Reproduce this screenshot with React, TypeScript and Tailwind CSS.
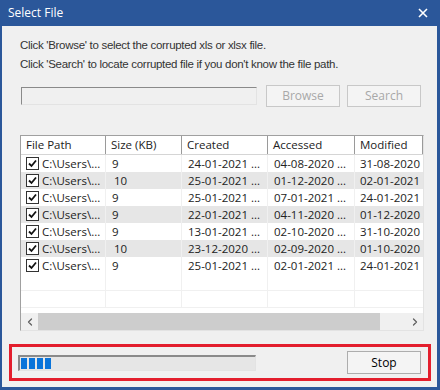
import { ChevronLeft, ChevronRight } from "lucide-react";

const rows = [
  ["9", "24-01-2021 13:05", "04-08-2020 10:12", "31-08-2020 12:40"],
  ["10", "25-01-2021 11:20", "01-12-2020 09:45", "02-01-2021 14:22"],
  ["9", "25-01-2021 11:24", "07-01-2021 16:03", "24-01-2021 17:30"],
  ["9", "22-01-2021 10:02", "04-11-2020 12:18", "01-12-2020 20:11"],
  ["9", "13-01-2021 15:47", "02-10-2020 11:06", "31-10-2020 18:55"],
  ["10", "23-12-2020 09:33", "02-09-2020 13:27", "01-10-2020 10:40"],
  ["9", "25-01-2021 12:09", "02-01-2021 08:14", "24-01-2021 19:02"],
];

const cols = ["w-[85px]", "w-[76px]", "w-[86px]", "w-[87px]", "w-[68px]"];

const CheckBox = () => (
  <span className="w-[13px] h-[13px] shrink-0 border border-[#333] bg-white flex items-center justify-center">
    <svg width="9" height="9" viewBox="0 0 9 9">
      <path d="M1 4.5 L3.5 7 L8 1.5" stroke="#111" strokeWidth="1.8" fill="none" />
    </svg>
  </span>
);

const App = () => {
  return (
    <div className="w-[440px] h-[390px] bg-[#2b579a] flex flex-col font-['Open_Sans',sans-serif]">
      {/* title bar */}
      <div className="h-[26px] flex items-center justify-between pl-[8px] pr-[12px] text-white">
        <span className="text-[12px]">Select File</span>
        <svg width="10" height="10" viewBox="0 0 10 10">
          <path d="M1 1 L9 9 M9 1 L1 9" stroke="white" strokeWidth="1.6" />
        </svg>
      </div>

      <div className="flex-1 bg-[#f0f0f0] ml-[2px] mr-[3px] mb-[3px] flex flex-col">
        <div className="pt-[10px] pl-[18px] text-[11.5px] tracking-[-0.3px] leading-[19px] text-[#333] font-['Liberation_Sans',sans-serif]">
          <p>Click 'Browse' to select the corrupted xls or xlsx file.</p>
          <p>Click 'Search' to locate corrupted file if you don't know the file path.</p>
        </div>

        <div className="mt-[11px] ml-[19px] flex items-center">
          <div className="w-[236px] h-[18px] border-t border-l border-[#8a8a8a] border-b border-r border-b-[#e3e3e3] border-r-[#e3e3e3] bg-[#f0f0f0]" />
          <button className="ml-[9px] w-[74px] h-[22px] border border-[#c8c8c8] bg-[#f4f4f4] text-[12px] text-[#a8a8a8]">
            Browse
          </button>
          <button className="ml-[7px] w-[74px] h-[22px] border border-[#c8c8c8] bg-[#f4f4f4] text-[12px] text-[#a8a8a8]">
            Search
          </button>
        </div>

        {/* file list */}
        <div className="mt-[28px] ml-[18px] w-[404px] h-[196px] border-t border-l border-[#a0a0a0] border-b border-r border-b-[#e3e3e3] border-r-[#e3e3e3] bg-white flex flex-col text-[11.5px] text-[#222]">
          <div className="h-[19px] flex shrink-0 border-b border-[#d5d5d5] bg-white">
            {["File Path", "Size (KB)", "Created", "Accessed", "Modified"].map((h, i) => (
              <div
                key={h}
                className={`${cols[i]} shrink-0 pl-[5px] flex items-center border-r border-[#9a9a9a] overflow-hidden whitespace-nowrap`}
              >
                {h}
              </div>
            ))}
          </div>
          <div className="flex-1 overflow-hidden">
            {rows.map((r, idx) => (
              <div
                key={idx}
                className={`h-[17px] flex ${idx % 2 === 1 ? "bg-[#e6e6e6]" : "bg-white"}`}
              >
                <div className={`${cols[0]} shrink-0 pl-[5px] flex items-center gap-[3px] border-r border-[#f0f0f0] overflow-hidden whitespace-nowrap`}>
                  <CheckBox />
                  <span>C:\Users\...</span>
                </div>
                <div className={`${cols[1]} shrink-0 ${r[0] === "10" ? "pl-[8px]" : "pl-[6px]"} flex items-center border-r border-[#f0f0f0]`}>
                  {r[0]}
                </div>
                <div className={`${cols[2]} shrink-0 pl-[6px] flex items-center border-r border-[#f0f0f0] whitespace-nowrap overflow-hidden`}>
                  {r[1].slice(0, 10)} ...
                </div>
                <div className={`${cols[3]} shrink-0 pl-[6px] flex items-center border-r border-[#f0f0f0] whitespace-nowrap overflow-hidden`}>
                  {r[2].slice(0, 10)} ...
                </div>
                <div className={`${cols[4]} shrink-0 pl-[5px] flex items-center whitespace-nowrap overflow-hidden`}>
                  {r[3]}
                </div>
              </div>
            ))}
            {[0, 1].map((k) => (
              <div key={k} className="h-[17px] flex border-b border-[#f0f0f0]">
                {cols.slice(0, 4).map((c) => (
                  <div key={c} className={`${c} shrink-0 border-r border-[#f0f0f0]`} />
                ))}
              </div>
            ))}
          </div>
          <div className="h-[17px] shrink-0 flex items-center bg-[#f0f0f0]">
            <span className="w-[17px] flex justify-center text-[#606060]">
              <ChevronLeft size={12} strokeWidth={2.5} />
            </span>
            <div className="w-[342px] h-[17px] bg-[#cdcdcd]" />
            <div className="flex-1" />
            <span className="w-[17px] flex justify-center text-[#606060]">
              <ChevronRight size={12} strokeWidth={2.5} />
            </span>
          </div>
        </div>

        {/* status area */}
        <div className="mt-[13px] ml-[7px] mr-[6px] h-[37px] border-[3px] border-[#e31e2d] flex items-center justify-between pl-[6px] pr-[7px]">
          <div className="w-[238px] h-[16px] border-t-2 border-l-2 border-[#8a8a8a] border-b border-r border-b-[#e3e3e3] border-r-[#e3e3e3] bg-[#e6e6e6] flex items-center gap-[2px] pl-[1px]">
            {[0, 1, 2, 3].map((b) => (
              <span key={b} className="w-[6px] h-[11px] bg-[#0a74da]" />
            ))}
          </div>
          <button className="w-[74px] h-[23px] border border-[#adadad] bg-[#f4f4f4] text-[12px] text-black">
            Stop
          </button>
        </div>
      </div>
    </div>
  );
};

export default App;
